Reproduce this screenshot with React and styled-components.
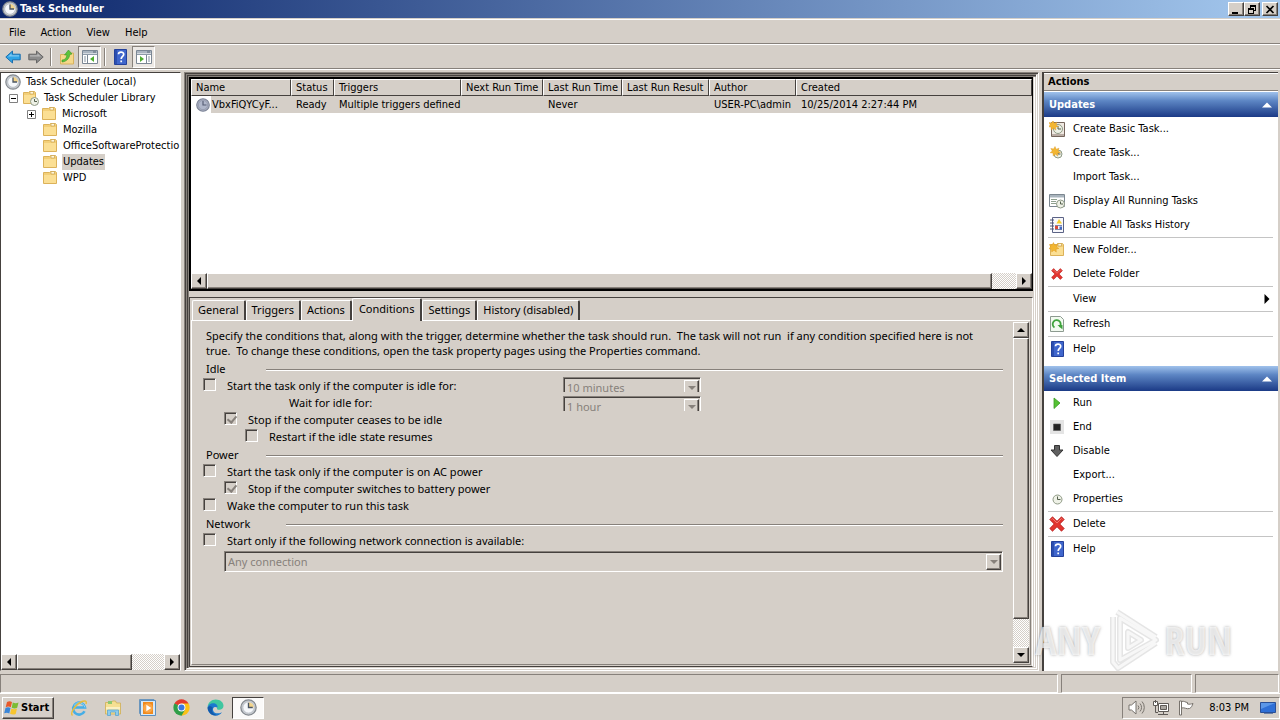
import styled, { createGlobalStyle, css } from "styled-components";

const face = "#d5cfc8";
const shade = "#87817b";
const dark = "#45413e";

const tabs = ["General", "Triggers", "Actions", "Conditions", "Settings", "History (disabled)"];

const columns = [
    { label: "Name", width: 100 },
    { label: "Status", width: 43 },
    { label: "Triggers", width: 127 },
    { label: "Next Run Time", width: 82 },
    { label: "Last Run Time", width: 79 },
    { label: "Last Run Result", width: 87 },
    { label: "Author", width: 87 },
    { label: "Created" },
];

const updateActions = [
    [
        { label: "Create Basic Task...", icon: <BasicTaskIcon /> },
        { label: "Create Task...", icon: <NewTaskIcon /> },
        { label: "Import Task..." },
        { label: "Display All Running Tasks", icon: <RunningIcon /> },
        { label: "Enable All Tasks History", icon: <HistoryIcon /> },
    ],
    [
        { label: "New Folder...", icon: <FolderIcon star /> },
        { label: "Delete Folder", icon: <CrossIcon small /> },
    ],
    [{ label: "View", submenu: true }],
    [{ label: "Refresh", icon: <RefreshIcon /> }],
    [{ label: "Help", icon: <HelpIcon /> }],
];

const itemActions = [
    [
        { label: "Run", icon: <RunIcon /> },
        { label: "End", icon: <EndIcon /> },
        { label: "Disable", icon: <DisableIcon /> },
        { label: "Export..." },
        { label: "Properties", icon: <SmallClockIcon /> },
    ],
    [{ label: "Delete", icon: <CrossIcon /> }],
    [{ label: "Help", icon: <HelpIcon /> }],
];

export default function App() {
    return (
        <Desktop>
            <GlobalStyle />
            <TitleBar>
                <ClockIcon size={16} />
                <h1>Task Scheduler</h1>
                <CaptionButton aria-label="Minimize">
                    <svg width="10" height="9"><path d="M1 7h6v2H1z" /></svg>
                </CaptionButton>
                <CaptionButton aria-label="Restore">
                    <svg width="10" height="9" fill="none" stroke="#000" shapeRendering="crispEdges">
                        <path d="M3.5 3V.5h5v5H7M3 1h6M1.5 3.5h5v5h-5zM1 4h6" />
                    </svg>
                </CaptionButton>
                <CaptionButton aria-label="Close" $gap>
                    <svg width="10" height="9"><path d="M1.5 1l7 7M8.5 1l-7 7" stroke="#000" strokeWidth="1.7" /></svg>
                </CaptionButton>
            </TitleBar>
            <MenuBar>
                <button>File</button>
                <button>Action</button>
                <button>View</button>
                <button>Help</button>
            </MenuBar>
            <ToolBar>
                <ToolButton aria-label="Back"><ArrowIcon color="#2fa4e6" edge="#1c6fae" /></ToolButton>
                <ToolButton aria-label="Forward"><ArrowIcon flip color="#8c8c8c" edge="#666" /></ToolButton>
                <ToolSeparator />
                <ToolButton aria-label="Up one level"><UpFolderIcon /></ToolButton>
                <ToolButton aria-label="Console tree" $pressed><PaneIcon /></ToolButton>
                <ToolSeparator />
                <ToolButton aria-label="Help"><HelpIcon /></ToolButton>
                <ToolButton aria-label="Action pane" $pressed><PaneIcon right /></ToolButton>
            </ToolBar>
            <Workspace>
                <TreePane>
                    <Tree>
                        <TreeRow><ClockIcon size={16} /><span>Task Scheduler (Local)</span></TreeRow>
                        <TreeRow $level={1}><Expander /><LibraryIcon /><span>Task Scheduler Library</span></TreeRow>
                        <TreeRow $level={2}><Expander closed /><FolderIcon /><span>Microsoft</span></TreeRow>
                        <TreeRow $level={3}><FolderIcon /><span>Mozilla</span></TreeRow>
                        <TreeRow $level={3}><FolderIcon /><span>OfficeSoftwareProtectio</span></TreeRow>
                        <TreeRow $level={3} $selected><FolderIcon /><span>Updates</span></TreeRow>
                        <TreeRow $level={3}><FolderIcon /><span>WPD</span></TreeRow>
                    </Tree>
                    <ScrollBar>
                        <ScrollButton aria-label="Scroll left"><Triangle dir="left" /></ScrollButton>
                        <ScrollThumb $share={78} />
                        <ScrollButton aria-label="Scroll right"><Triangle dir="right" /></ScrollButton>
                    </ScrollBar>
                </TreePane>
                <MiddlePane>
                    <MiddleFrame>
                        <TaskPane>
                            <TaskTable>
                                <colgroup>
                                    {columns.map((c) => <Column key={c.label} $width={c.width} />)}
                                </colgroup>
                                <thead>
                                    <tr>{columns.map((c) => <th key={c.label}>{c.label}</th>)}</tr>
                                </thead>
                                <tbody>
                                    <tr>
                                        <NameCell><div><ClockIcon size={14} dim /><span>VbxFiQYCyF...</span></div></NameCell>
                                        <td>Ready</td>
                                        <td>Multiple triggers defined</td>
                                        <td />
                                        <td>Never</td>
                                        <td />
                                        <td>USER-PC\admin</td>
                                        <td>10/25/2014 2:27:44 PM</td>
                                    </tr>
                                </tbody>
                            </TaskTable>
                            <ScrollBar>
                                <ScrollButton aria-label="Scroll left"><Triangle dir="left" /></ScrollButton>
                                <ScrollThumb $share={97} />
                                <ScrollButton aria-label="Scroll right"><Triangle dir="right" /></ScrollButton>
                            </ScrollBar>
                        </TaskPane>
                        <DetailPane>
                            <Tabs>
                                {tabs.map((t) => <Tab key={t} $active={t === "Conditions"}>{t}</Tab>)}
                            </Tabs>
                            <TabBody>
                                <Conditions />
                                <ScrollBar $vertical>
                                    <ScrollButton aria-label="Scroll up"><Triangle dir="up" /></ScrollButton>
                                    <ScrollThumb $share={91} $vertical />
                                    <ScrollButton aria-label="Scroll down"><Triangle dir="down" /></ScrollButton>
                                </ScrollBar>
                            </TabBody>
                        </DetailPane>
                    </MiddleFrame>
                </MiddlePane>
                <ActionsPane>
                    <h2>Actions</h2>
                    <ActionSection title="Updates" groups={updateActions} />
                    <ActionSection title="Selected Item" groups={itemActions} />
                </ActionsPane>
            </Workspace>
            <StatusBar>
                <StatusCell />
                <StatusCell $width={131} />
                <StatusCell $width={84} />
            </StatusBar>
            <TaskBar>
                <StartButton><WindowsIcon />Start</StartButton>
                <LaunchButton aria-label="Internet Explorer"><IeIcon /></LaunchButton>
                <LaunchButton aria-label="Explorer"><ExplorerIcon /></LaunchButton>
                <LaunchButton aria-label="Media Player"><MediaIcon /></LaunchButton>
                <LaunchButton aria-label="Chrome"><ChromeIcon /></LaunchButton>
                <LaunchButton aria-label="Edge"><EdgeIcon /></LaunchButton>
                <LaunchButton aria-label="Task Scheduler" $active><ClockIcon size={17} /></LaunchButton>
                <Tray>
                    <SpeakerIcon />
                    <NetworkIcon />
                    <FlagIcon />
                    <time>8:03 PM</time>
                    <DesktopIcon />
                </Tray>
            </TaskBar>
            <Watermark>
                <span>ANY</span>
                <PlayLogo />
                <span>RUN</span>
            </Watermark>
        </Desktop>
    );
}

function Conditions() {
    return (
        <Form>
            <p>
                Specify the conditions that, along with the trigger, determine whether the task should run.&nbsp; The task will not run&nbsp; if any
                condition specified here is not true.&nbsp; To change these conditions, open the task property pages using the Properties command.
            </p>
            <GroupHeading><h3>Idle</h3></GroupHeading>
            <IdleRows>
                <div>
                    <Check label="Start the task only if the computer is idle for:" />
                    <WaitLabel htmlFor="wait">Wait for idle for:</WaitLabel>
                    <Check level={1} checked label="Stop if the computer ceases to be idle" />
                    <Check level={2} label="Restart if the idle state resumes" />
                </div>
                <IdleSelects>
                    <Combo clipped label="Idle time" value="10 minutes" />
                    <Combo clipped id="wait" value="1 hour" />
                </IdleSelects>
            </IdleRows>
            <GroupHeading><h3>Power</h3></GroupHeading>
            <Check label="Start the task only if the computer is on AC power" />
            <Check level={1} checked label="Stop if the computer switches to battery power" />
            <Check label="Wake the computer to run this task" />
            <GroupHeading $wide><h3>Network</h3></GroupHeading>
            <Check label="Start only if the following network connection is available:" />
            <NetworkRow><Combo label="Network connection" value="Any connection" /></NetworkRow>
        </Form>
    );
}

function Check({ label, checked, level = 0 }) {
    return (
        <CheckRow $level={level}>
            <input type="checkbox" checked={!!checked} disabled readOnly />
            <span>{label}</span>
        </CheckRow>
    );
}

function Combo({ value, label, id, clipped }) {
    return (
        <ComboClip $clipped={clipped}>
            <ComboBox>
                <select id={id} aria-label={label} disabled>
                    <option>{value}</option>
                </select>
                <ComboArrow><Triangle dir="down" color={shade} /></ComboArrow>
            </ComboBox>
        </ComboClip>
    );
}

function ActionSection({ title, groups }) {
    return (
        <Section>
            <SectionHeader>{title}<Triangle dir="up" color="#fff" size={10} /></SectionHeader>
            {groups.map((group) => (
                <ActionGroup key={group[0].label}>
                    {group.map((a) => (
                        <li key={a.label}>
                            <ActionButton>
                                <IconSlot>{a.icon}</IconSlot>
                                <span>{a.label}</span>
                                {a.submenu && <Triangle dir="right" size={10} />}
                            </ActionButton>
                        </li>
                    ))}
                </ActionGroup>
            ))}
        </Section>
    );
}

function Triangle({ dir, color = "#000", size = 8 }) {
    const paths = {
        left: "M6 0v8L2 4z",
        right: "M2 0v8l4-4z",
        up: "M0 6h8L4 2z",
        down: "M0 2h8L4 6z",
    };
    return <svg width={size} height={size} viewBox="0 0 8 8"><path d={paths[dir]} fill={color} /></svg>;
}

function ClockIcon({ size, dim }) {
    return (
        <svg width={size} height={size} viewBox="0 0 16 16">
            <circle cx="8" cy="8" r="7.2" fill={dim ? "#a9afc0" : "#c9cdd2"} stroke={dim ? "#7c8396" : "#84898f"} strokeWidth="1.2" />
            <circle cx="8" cy="8" r="5.3" fill={dim ? "#b0b7ca" : "#f6f8fb"} stroke={dim ? "#8a91a5" : "#aeb4bb"} strokeWidth=".7" />
            {!dim && <path d="M8 8V3a5 5 0 0 1 5 5z" fill="#f3d48a" />}
            <path d="M8 3.5V8h4" fill="none" stroke={dim ? "#555c73" : "#4b5563"} strokeWidth="1.3" />
        </svg>
    );
}

function SmallClock({ x, y, r = 4.5 }) {
    return (
        <g>
            <circle cx={x} cy={y} r={r} fill="#eef1e6" stroke="#8f9a86" />
            <path d={`M${x} ${y - r + 1.5}V${y}h${r - 1.5}`} fill="none" stroke="#54604e" />
        </g>
    );
}

function Star({ x, y }) {
    return <path transform={`translate(${x} ${y})`} d="M0-4.5l1.2 2.7 2.8-1-1 2.8 2.4 1.4-2.8.8.2 2.9L.5 3.2-1.8 5l-.2-2.9-2.9-.4L-2.7 0l-1.5-2.5 2.8.4z" fill="#f2b632" stroke="#d8921c" strokeWidth=".4" />;
}

function FolderIcon({ star }) {
    return (
        <svg width="16" height="16" viewBox="0 0 16 16">
            <path d="M1.5 2.5h6l1-1h5l1 1v11h-13z" fill="#f3cf78" stroke="#dcb25a" />
            <path d="M2 5h12v8H2z" fill="#fbdf94" />
            <path d="M9 1.5h3.5V4H9z" fill="#fff6da" stroke="#c9a24e" strokeWidth=".7" />
            {star && <Star x={4.5} y={5} />}
        </svg>
    );
}

function LibraryIcon() {
    return (
        <svg width="16" height="16" viewBox="0 0 16 16">
            <path d="M.5 2.5h5l1-1h5l1 1v11H.5z" fill="#f3cf78" stroke="#dcb25a" />
            <path d="M1 5h11v8H1z" fill="#fbdf94" />
            <path d="M7 1.5h3.5V4H7z" fill="#fff6da" stroke="#c9a24e" strokeWidth=".7" />
            <SmallClock x={11.5} y={11.5} r={4} />
        </svg>
    );
}

function Expander({ closed }) {
    return (
        <svg width="9" height="9">
            <path d="M.5.5h8v8h-8z" fill="#fff" stroke="#808080" />
            <path d={closed ? "M2 4.5h5M4.5 2v5" : "M2 4.5h5"} stroke="#000" />
        </svg>
    );
}

function ArrowIcon({ flip, color, edge }) {
    return (
        <svg width="16" height="16" viewBox="0 0 16 16">
            <g transform={flip ? "matrix(-1 0 0 1 16 0)" : undefined}>
                <path d="M7.5 2L.8 8l6.7 6v-3.2h7.7V5.2H7.5z" fill={color} stroke={edge} />
                <path d="M6.5 4.5L3 7.5h11V6.200H6.500z" fill="#fff" fillOpacity=".4" />
            </g>
        </svg>
    );
}

function UpFolderIcon() {
    return (
        <svg width="16" height="16" viewBox="0 0 16 16">
            <path d="M1.5 5.5h7l1-1.5h5v11h-13z" fill="#f5d88a" stroke="#d8b25e" />
            <path d="M3 11c3 0 4.500-2 5-5L5.500 6 9.500 1l3.500 4-2.300.5C10.500 9 8 12.500 3 13z" fill="#5cc43a" stroke="#3b962a" strokeWidth=".6" />
        </svg>
    );
}

function PaneIcon({ right }) {
    return (
        <svg width="16" height="14" viewBox="0 0 16 14">
            <path d="M.5.5h15v13H.5z" fill="#fff" stroke="#7b8794" />
            <path d="M1 1h14v2.5H1z" fill="#aab4c0" />
            <path d="M11 2h3" stroke="#5a6878" />
            <path d="M1 4.5h14" stroke="#8e9aa8" />
            {right ? (
                <>
                    <path d="M10.5 5v8" stroke="#7b8794" />
                    <path d="M12 7h2M12 9h2M12 11h2" stroke="#8592a0" />
                    <path d="M4 6v6l4-3z" fill="#4fae30" />
                </>
            ) : (
                <>
                    <path d="M5.5 5v8" stroke="#7b8794" />
                    <path d="M2 7h2M2 9h2M2 11h2" stroke="#8592a0" />
                    <path d="M12 6v6L8 9z" fill="#4fae30" />
                </>
            )}
        </svg>
    );
}

function HelpIcon() {
    return (
        <svg width="13" height="16" viewBox="0 0 13 16">
            <path d="M.5.5h12v15H.5z" fill="#3f66cc" stroke="#24419b" />
            <path d="M1 1h2v14H1z" fill="#2c4fb0" />
            <path d="M4.5 5.300C4.500 2.400 9.700 2.300 9.700 5.300 9.700 7.500 7.200 7.300 7.200 10M7.200 11.500v1.800" fill="none" stroke="#fff" strokeWidth="1.7" />
        </svg>
    );
}

function BasicTaskIcon() {
    return (
        <svg width="16" height="16" viewBox="0 0 16 16">
            <path d="M2.5 1.5h13v14h-13z" fill="#efe9e2" stroke="#75655c" />
            <path d="M3 13h12v2H3z" fill="#b9aca4" />
            <SmallClock x={9} y={8} r={4.5} />
            <Star x={4} y={4} />
        </svg>
    );
}

function NewTaskIcon() {
    return (
        <svg width="16" height="16" viewBox="0 0 16 16">
            <SmallClock x={9} y={9} r={4} />
            <Star x={6} y={6} />
        </svg>
    );
}

function SmallClockIcon() {
    return <svg width="16" height="16" viewBox="0 0 16 16"><SmallClock x={8.5} y={8.5} r={4.5} /></svg>;
}

function RunningIcon() {
    return (
        <svg width="16" height="16" viewBox="0 0 16 16">
            <path d="M.5 1.5h15v12H.5z" fill="#fff" stroke="#7c8790" />
            <path d="M1 2h14v2.5H1z" fill="#a9b4bd" />
            <path d="M2 6.5h6M2 8.5h5M2 10.5h5" stroke="#8fa08e" />
            <SmallClock x={11.5} y={11} r={4} />
        </svg>
    );
}

function HistoryIcon() {
    return (
        <svg width="14" height="16" viewBox="0 0 14 16">
            <path d="M2.5.5h11v15h-11z" fill="#f7f7fb" stroke="#5b6385" />
            <path d="M5 8.5h7M5 12.5h7M5 10.5h3" stroke="#7f88a8" />
            <path d="M9 2l3 4.5H6.500z" fill="#f4cf2b" />
            <path d="M5 9h3v3H5z" fill="#d84a3a" />
            <path d="M9.5 9.5H12v3H9.500z" fill="#4469c0" />
            <path d="M0 3h4M0 6h4M0 9h4M0 12h4" stroke="#4b5272" />
        </svg>
    );
}

function CrossIcon({ small }) {
    const size = small ? 12 : 16;
    return (
        <svg width={size} height={size} viewBox="0 0 16 16" strokeLinejoin="round">
            <path d="M3.500.8L8 5.200 12.500.8l2.700 2.700L10.800 8l4.400 4.500-2.700 2.700L8 10.800l-4.500 4.400-2.700-2.700L5.200 8 .8 3.500z" fill="#e2352f" stroke="#b51c1c" strokeWidth=".8" />
            <path d="M2.500 3.500l1-1L8 7l4.500-4.500 1 1" fill="none" stroke="#f07a72" />
        </svg>
    );
}

function RefreshIcon() {
    return (
        <svg width="14" height="16" viewBox="0 0 14 16">
            <path d="M.5.5h10l3 3v12H.5z" fill="#f2faf0" stroke="#8d9a90" />
            <path d="M4.5 11.5A4 4 0 1 1 9.500 11" fill="none" stroke="#3ea23c" strokeWidth="1.8" />
            <path d="M7.5 9h5v4.500z" fill="#3ea23c" />
        </svg>
    );
}

function RunIcon() {
    return <svg width="16" height="16" viewBox="0 0 16 16"><path d="M5 3v10.5L11 8z" fill="#55c234" stroke="#3a9a24" strokeWidth=".8" /></svg>;
}

function EndIcon() {
    return (
        <svg width="14" height="14" viewBox="0 0 14 14">
            <path d="M0 0h14v14H0z" fill="#e4e4e4" />
            <path d="M3.5 4h7v6.5h-7z" fill="#222" stroke="#555" strokeWidth=".6" />
        </svg>
    );
}

function DisableIcon() {
    return <svg width="14" height="14" viewBox="0 0 14 14"><path d="M4.5 1.5h5V6H13l-6 6.5L1 6h3.500z" fill="#606060" stroke="#333" /></svg>;
}

function WindowsIcon() {
    return (
        <svg width="16" height="16" viewBox="0 0 16 16">
            <path d="M3 2c2-1 3.500-.8 5 .1L6.800 7.300C5.300 6.400 3.500 6.400 1.700 7.200z" fill="#e8592a" />
            <path d="M8.800 2.500c2 1 3.700 1 5.700 0L13.200 7.800c-2 1-3.700.8-5.500-.1z" fill="#7cbc35" />
            <path d="M1.500 8c1.800-.9 3.500-.8 5 .1L5.300 13.500C3.700 12.500 2 12.600.2 13.300z" fill="#3a86d8" />
            <path d="M7.400 8.500c1.800 1 3.600 1 5.600.1L11.700 14c-2 .9-3.800.7-5.600-.2z" fill="#f7c52e" />
        </svg>
    );
}

function IeIcon() {
    return (
        <svg width="18" height="18" viewBox="0 0 18 18" fill="none">
            <path d="M14.500 12.200A6 6 0 1 1 15 8.500H4.500" stroke="#46aee6" strokeWidth="2.6" />
            <path d="M15 8.500a6 6 0 0 0-11-2" stroke="#8fd4f5" strokeWidth="1" />
            <path d="M2.500 16.500C-.5 14 6 5 12 2.500c3-1.200 5-.5 4 2.500" stroke="#e9bd3c" strokeWidth="1.4" />
        </svg>
    );
}

function ExplorerIcon() {
    return (
        <svg width="18" height="18" viewBox="0 0 18 18">
            <path d="M1.5 3.5h6l1-1.5h3l1 2h4v11h-15z" fill="#f5df92" stroke="#cfae55" strokeWidth=".8" />
            <path d="M4 2h4v3H4z" fill="#8cc870" />
            <path d="M2 8h14v2.5H2z" fill="#fbf0c2" />
            <path d="M3.5 16.5V11h11v5.5h-3V13h-5v3.500z" fill="#8dcbed" stroke="#5ca4cf" strokeWidth=".8" />
        </svg>
    );
}

function MediaIcon() {
    return (
        <svg width="17" height="17" viewBox="0 0 17 17">
            <path d="M.5.5H15v14H.5z" fill="#9cc5e8" stroke="#6b96bd" />
            <path d="M1.5 1.5h15v15h-15z" fill="#d7e9f7" stroke="#5b8fc0" />
            <path d="M4 3h10v12H4z" fill="#f08a1d" />
            <circle cx="9" cy="9" r="4.8" fill="#f9a648" />
            <path d="M7.3 5.800v6.400L12.300 9z" fill="#fff" />
        </svg>
    );
}

function ChromeIcon() {
    return (
        <svg width="17" height="17" viewBox="0 0 48 48">
            <path d="M24 24L4.100 12.500A23 23 0 0 1 43.900 12.500z" fill="#e33b2e" />
            <path d="M24 24L43.900 12.500A23 23 0 0 1 24 47z" fill="#fbc116" />
            <path d="M24 24V47A23 23 0 0 1 4.100 12.500z" fill="#2f9e48" />
            <path d="M24 12.500h20L34 30z" fill="#fbc116" />
            <path d="M14 30L4.100 12.500 24 24l10 6-10 17z" fill="#2f9e48" />
            <circle cx="24" cy="24" r="11" fill="#fff" />
            <circle cx="24" cy="24" r="8.5" fill="#3b78e0" />
        </svg>
    );
}

function EdgeIcon() {
    return (
        <svg width="17" height="17" viewBox="0 0 17 17">
            <path d="M.6 8.500C.6 3.500 4.500.5 8.700.5c4.800 0 7.800 3 7.800 6.300 0 2.700-2 4-4.300 4-2 0-2.500-.8-2.100-1.600C10.800 7.300 9 5.300 6 5.300 3.500 5.300 1.400 6.500.6 8.500z" fill="#3fc6a0" />
            <path d="M.6 8.500C1.400 5.500 3.700 4.300 6 4.300c3 0 5 2 4.500 4.500C7.500 6.500 5 9 6.300 12c1 2.500 4.500 3.200 8.700 1.200-1.500 2.200-3.700 3.400-6.500 3.400C4 16.600.6 13 .6 8.500z" fill="#1b78cf" />
            <path d="M5.700 8.700c-1.800 3 .2 7.300 5 7.400C6 17.500.9 14.200.6 8.500c1.500-2 4-1.500 5.100.2z" fill="#1558a8" />
        </svg>
    );
}

function SpeakerIcon() {
    return (
        <svg width="17" height="15" viewBox="0 0 17 15" fill="none" stroke="#77726c">
            <path d="M1 5h2.500L8 1v13l-4.500-4H1z" fill="#fff" />
            <path d="M10 5.500a3 3 0 0 1 0 4M12 3.500a6 6 0 0 1 0 8M14 1.500a9 9 0 0 1 0 12" />
        </svg>
    );
}

function NetworkIcon() {
    return (
        <svg width="17" height="16" viewBox="0 0 17 16" fill="none" stroke="#5e5a56">
            <path d="M5.5 3.5h10v8h-10z" fill="#fff" />
            <path d="M7.5 5.5h6v4h-6z" fill="#aaa6a0" />
            <path d="M5 14.5h10M10.5 12v2.500M2.500 5v7.500H5" />
            <path d="M.5 1.5h4v4h-4z" fill="#fff" />
            <path d="M2.5 0v3" />
        </svg>
    );
}

function FlagIcon() {
    return (
        <svg width="17" height="16" viewBox="0 0 17 16" stroke="#77726c">
            <path d="M3.5 1.500c2.500-1 4 1 6 1V4c2 .5 3.500 0 5.500-.5-1 2.500-1.500 4-3.500 5-3 1-5-1.500-8-.5z" fill="#fff" />
            <path d="M1.5 1h2v14h-2z" fill="#fff" />
        </svg>
    );
}

function DesktopIcon() {
    return (
        <svg width="16" height="14" viewBox="0 0 16 14">
            <path d="M.5 1.5h15v10H.5z" fill="#2f6fd6" stroke="#2a4f96" />
            <path d="M1 2h14L1 8z" fill="#5c97e8" />
            <path d="M4 12.500h9" stroke="#6a7fa5" />
        </svg>
    );
}

function PlayLogo() {
    const lines = "M14 4L53 29M10 9v45l5 6 38-25M17 10v42l36-20zM25 24v16l13-8z";
    return (
        <svg width="58" height="64" viewBox="0 0 58 64" fill="none" strokeLinejoin="round">
            <path d={lines} stroke="#999" strokeOpacity=".25" strokeWidth="6" />
            <path d={lines} stroke="#fff" strokeOpacity=".7" strokeWidth="3" />
        </svg>
    );
}

const GlobalStyle = createGlobalStyle`
    *{
        box-sizing: border-box;
    }
    body{
        margin: 0;
        background: ${face};
    }
    button, select, input{
        font: inherit;
        color: inherit;
        margin: 0;
    }
    button{
        padding: 0;
        border: none;
        background: none;
        text-align: left;
    }
    h1, h2, h3, p, ul{
        margin: 0;
        padding: 0;
        font: inherit;
        list-style: none;
    }
    svg{
        display: block;
        flex: none;
    }
`;

const raised = css`
    border: 1px solid;
    border-color: #fff ${dark} ${dark} #fff;
    box-shadow: inset -1px -1px ${shade};
`;

const sunken = css`
    border: 1px solid;
    border-color: ${shade} #fff #fff ${shade};
`;

const Desktop = styled.div`
    position: relative;
    min-height: 100vh;
    display: flex;
    flex-direction: column;
    font-family: "DejaVu Sans Condensed", Tahoma, sans-serif;
    font-size: 11px;
    line-height: 16px;
    color: #000;
    background: ${face};
    white-space: nowrap;
`;

const TitleBar = styled.header`
    display: flex;
    align-items: center;
    height: 18px;
    padding: 0 2px;
    background: linear-gradient(to right, #0c266b, #a4c8ee);
    h1{
        flex: 1;
        padding-left: 2px;
        font-weight: 700;
        color: #fff;
    }
`;

const CaptionButton = styled.button`
    ${raised}
    display: flex;
    align-items: center;
    justify-content: center;
    width: 16px;
    height: 14px;
    margin-left: ${(p) => (p.$gap ? "2px" : "0")};
    background: ${face};
`;

const MenuBar = styled.nav`
    display: flex;
    align-items: center;
    gap: 15px;
    height: 25px;
    margin-top: 1px;
    padding: 2px 9px 0;
    border-top: 1px solid #fff;
    border-bottom: 1px solid ${shade};
`;

const ToolBar = styled.div`
    display: flex;
    align-items: center;
    height: 25px;
    padding: 0 1px;
    border-top: 1px solid #fff;
    border-bottom: 1px solid ${shade};
    box-shadow: 0 1px #fff;
`;

const ToolButton = styled.button`
    display: flex;
    align-items: center;
    justify-content: center;
    width: 23px;
    height: 22px;
    ${(p) => p.$pressed && css`
        ${sunken}
        background: #ece8e4;
    `}
`;

const ToolSeparator = styled.div`
    width: 2px;
    height: 18px;
    margin: 0 3px;
    border-left: 1px solid ${shade};
    border-right: 1px solid #fff;
`;

const Workspace = styled.main`
    flex: 1;
    display: flex;
    gap: 3px;
    min-height: 0;
    padding: 3px 2px 0 0;
`;

const TreePane = styled.section`
    display: flex;
    flex-direction: column;
    width: 181px;
    border: 1px solid;
    border-color: ${dark} #fff ${face} ${dark};
    background: #fff;
    overflow: hidden;
`;

const Tree = styled.div`
    flex: 1;
    padding: 1px 0 0 4px;
    overflow: hidden;
`;

const treeIndent = [0, 4, 22, 37];

const TreeRow = styled.div`
    display: flex;
    align-items: center;
    gap: 5px;
    height: 16px;
    padding-left: ${(p) => treeIndent[p.$level || 0]}px;
    span{
        background: ${(p) => (p.$selected ? face : "none")};
        box-shadow: ${(p) => (p.$selected ? `-1px 0 ${face}, 1px 0 ${face}` : "none")};
    }
`;

const ScrollBar = styled.div`
    display: flex;
    flex-direction: ${(p) => (p.$vertical ? "column" : "row")};
    justify-content: space-between;
    flex: none;
    width: ${(p) => (p.$vertical ? "16px" : "auto")};
    background: repeating-conic-gradient(${face} 0 25%, #fff 0 50%) 0 0 / 2px 2px;
`;

const ScrollButton = styled.button`
    ${raised}
    display: flex;
    flex: none;
    align-items: center;
    justify-content: center;
    width: 16px;
    height: 16px;
    background: ${face};
`;

const ScrollThumb = styled.div`
    ${raised}
    flex: none;
    margin: ${(p) => (p.$vertical ? "0 0 auto" : "0 auto 0 0")};
    ${(p) => (p.$vertical ? "height" : "width")}: calc((100% - 32px) * ${(p) => p.$share / 100});
    background: ${face};
`;

const MiddlePane = styled.section`
    ${sunken}
    flex: 1;
    display: flex;
    min-width: 0;
    padding: 1px;
    box-shadow: inset 1px 1px ${dark}, inset -1px -1px ${face};
`;

const MiddleFrame = styled.div`
    ${sunken}
    flex: 1;
    display: flex;
    flex-direction: column;
    gap: 6px;
    min-width: 0;
    padding: 2px 3px 1px 2px;
    box-shadow: inset 1px 1px ${dark}, inset 2px 2px ${shade}, inset -1px -1px ${face}, inset -2px -1px #fff;
`;

const TaskPane = styled.div`
    display: flex;
    flex-direction: column;
    justify-content: space-between;
    flex: 213 1 0;
    border: 2px solid #000;
    border-right-width: 1px;
    background: #fff;
`;

const TaskTable = styled.table`
    width: 100%;
    table-layout: fixed;
    border-collapse: separate;
    border-spacing: 0;
    th, td{
        height: 17px;
        padding: 0 0 0 5px;
        font-weight: 400;
        line-height: 14px;
        text-align: left;
        background: ${face};
        overflow: hidden;
    }
    th{
        border: 1px solid;
        border-color: #fff ${dark} ${dark} #fff;
        padding-left: 4px;
    }
`;

const Column = styled.col`
    width: ${(p) => (p.$width ? `${p.$width}px` : "auto")};
`;

const NameCell = styled.td`
    div{
        display: flex;
        align-items: center;
        gap: 2px;
        height: 17px;
        margin-left: -5px;
        padding-left: 5px;
        background: linear-gradient(to right, #fff 20px, ${face} 20px);
    }
`;

const DetailPane = styled.div`
    display: flex;
    flex-direction: column;
    flex: 370 1 0;
    padding: 1px;
    border: 1px solid;
    border-color: ${dark} #fff ${dark} ${dark};
    font-family: "Noto Sans", "Segoe UI", sans-serif;
`;

const Tabs = styled.div`
    display: flex;
    align-items: flex-end;
    height: 21px;
    padding-left: 1px;
`;

const Tab = styled.button`
    height: ${(p) => (p.$active ? "23px" : "20px")};
    margin-bottom: ${(p) => (p.$active ? "-1px" : "0")};
    padding: ${(p) => (p.$active ? "0 6px 3px" : "0 5px 1px")};
    border: 1px solid #fff;
    border-right: 2px solid ${dark};
    border-bottom: none;
    border-radius: 2px 2px 0 0;
    background: ${face};
    z-index: ${(p) => (p.$active ? 1 : 0)};
`;

const TabBody = styled.div`
    flex: 1;
    display: flex;
    justify-content: space-between;
    border: 1px solid;
    border-color: #fff ${shade} ${shade} #fff;
    padding: 1px 1px 1px 0;
`;

const Form = styled.form`
    flex: 1;
    min-width: 0;
    padding: 6px 10px 50px 11px;
    line-height: 17px;
    p{
        margin-bottom: 1px;
        padding: 0 8px 0 3px;
        line-height: 15px;
        white-space: normal;
    }
`;

const GroupHeading = styled.div`
    display: grid;
    grid-template-columns: ${(p) => (p.$wide ? "83px" : "63px")} 1fr;
    align-items: center;
    height: 18px;
    padding-top: 1px;
    h3{
        padding-left: 3px;
    }
    &::after{
        content: "";
        height: 2px;
        margin-top: 3px;
        background: linear-gradient(${shade} 50%, #fff 50%);
    }
`;

const IdleRows = styled.div`
    display: grid;
    grid-template-columns: 360px 138px;
`;

const IdleSelects = styled.div`
    display: flex;
    flex-direction: column;
    gap: 4px;
`;

const CheckRow = styled.label`
    display: flex;
    align-items: center;
    height: 17px;
    padding-left: ${(p) => p.$level * 21}px;
    input{
        appearance: none;
        width: 13px;
        height: 13px;
        margin: 0 11px 3px 0;
        border: 1px solid;
        border-color: ${shade} #fff #fff ${shade};
        box-shadow: inset 1px 1px ${dark};
    }
    input:checked::after{
        content: "";
        display: block;
        width: 4px;
        height: 7px;
        margin: 1px 0 0 4px;
        border: solid ${shade};
        border-width: 0 2px 2px 0;
        transform: rotate(40deg);
    }
`;

const WaitLabel = styled.label`
    display: block;
    padding-left: 86px;
`;

const ComboClip = styled.div`
    height: ${(p) => (p.$clipped ? "15px" : "21px")};
    overflow: hidden;
`;

const ComboBox = styled.div`
    display: flex;
    height: 21px;
    border: 1px solid;
    border-color: ${shade} #fff #fff ${shade};
    box-shadow: inset 1px 1px ${dark};
    padding: 2px 1px 1px 1px;
    select{
        flex: 1;
        min-width: 0;
        padding: 0 0 0 2px;
        border: none;
        appearance: none;
        background: none;
        line-height: 16px;
        color: ${shade};
        opacity: 1;
    }
`;

const ComboArrow = styled.span`
    ${raised}
    display: flex;
    align-items: center;
    justify-content: center;
    width: 15px;
`;

const NetworkRow = styled.div`
    padding: 2px 0 0 21px;
`;

const ActionsPane = styled.aside`
    width: 236px;
    border-top: 1px solid ${dark};
    border-left: 2px solid ${dark};
    background: #fff;
    h2{
        height: 18px;
        padding-left: 4px;
        border-top: 1px solid #fff;
        border-bottom: 1px solid ${shade};
        background: ${face};
        font-weight: 700;
    }
`;

const Section = styled.section`
    padding: 1px 0 4px;
`;

const SectionHeader = styled.button`
    display: flex;
    align-items: center;
    justify-content: space-between;
    width: 100%;
    height: 25px;
    padding: 0 6px 0 5px;
    background: linear-gradient(#a0c2ec, #5d86c4 35%, #1b3a86);
    font-weight: 700;
    color: #fff;
`;

const ActionGroup = styled.ul`
    margin: 0 5px 0 4px;
    & + &{
        border-top: 1px solid #c4c4c4;
    }
`;

const ActionButton = styled.button`
    display: flex;
    align-items: center;
    width: 100%;
    height: 24px;
    padding-right: 1px;
    span:nth-child(2){
        flex: 1;
    }
`;

const IconSlot = styled.span`
    display: flex;
    justify-content: center;
    width: 18px;
    margin-right: 7px;
`;

const StatusBar = styled.footer`
    display: flex;
    gap: 3px;
    height: 22px;
    padding: 3px 1px 0 0;
`;

const StatusCell = styled.div`
    ${sunken}
    flex: ${(p) => (p.$width ? `0 0 ${p.$width}px` : "1")};
`;

const TaskBar = styled.footer`
    display: flex;
    align-items: center;
    height: 27px;
    padding: 1px 0 0 2px;
    border-top: 1px solid #fff;
`;

const StartButton = styled.button`
    ${raised}
    display: flex;
    align-items: center;
    gap: 1px;
    height: 22px;
    padding: 0 4px 0 1px;
    margin-right: 8px;
    font-weight: 700;
`;

const LaunchButton = styled.button`
    display: flex;
    align-items: center;
    justify-content: center;
    width: ${(p) => (p.$active ? "32px" : "34px")};
    height: 22px;
    ${(p) => p.$active && css`
        border: 1px solid;
        border-color: ${dark} #fff #fff ${dark};
        background: #fbfaf9;
    `}
`;

const Tray = styled.div`
    ${sunken}
    display: flex;
    align-items: center;
    gap: 8px;
    height: 22px;
    margin-left: auto;
    padding: 0 3px 0 5px;
    time{
        padding: 0 3px 0 6px;
    }
`;

const Watermark = styled.div`
    position: absolute;
    right: 48px;
    bottom: 48px;
    display: flex;
    align-items: center;
    gap: 3px;
    pointer-events: none;
    font-family: "Open Sans Condensed", "Roboto Condensed", sans-serif;
    font-size: 40px;
    line-height: 64px;
    color: rgba(255, 255, 255, 0.7);
    text-shadow: 0 0 3px rgba(120, 120, 120, 0.6);
`;
